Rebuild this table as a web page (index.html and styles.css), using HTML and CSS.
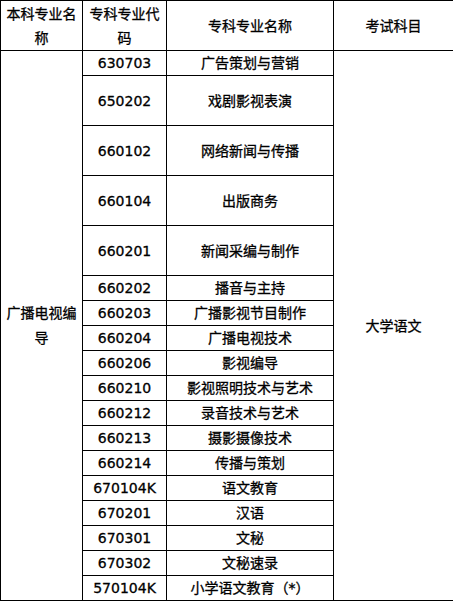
FILE: index.html
```html
<!DOCTYPE html>
<html lang="zh">
<head>
<meta charset="utf-8">
<link rel="stylesheet" href="styles.css">
</head>
<body>
<table class="majors">
  <colgroup>
    <col class="c1"><col class="c2"><col class="c3"><col class="c4">
  </colgroup>
  <thead>
    <tr class="head">
      <th>本科专业名称</th>
      <th>专科专业代码</th>
      <th>专科专业名称</th>
      <th>考试科目</th>
    </tr>
  </thead>
  <tbody>
    <tr class="r1">
      <td rowspan="18" class="major">广播电视编导</td>
      <td>630703</td><td>广告策划与营销</td>
      <td rowspan="18" class="subject">大学语文</td>
    </tr>
    <tr class="r2"><td>650202</td><td>戏剧影视表演</td></tr>
    <tr class="r2"><td>660102</td><td>网络新闻与传播</td></tr>
    <tr class="r2"><td>660104</td><td>出版商务</td></tr>
    <tr class="r2"><td>660201</td><td>新闻采编与制作</td></tr>
    <tr class="r1"><td>660202</td><td>播音与主持</td></tr>
    <tr class="r1"><td>660203</td><td>广播影视节目制作</td></tr>
    <tr class="r1"><td>660204</td><td>广播电视技术</td></tr>
    <tr class="r1"><td>660206</td><td>影视编导</td></tr>
    <tr class="r1"><td>660210</td><td>影视照明技术与艺术</td></tr>
    <tr class="r1"><td>660212</td><td>录音技术与艺术</td></tr>
    <tr class="r1"><td>660213</td><td>摄影摄像技术</td></tr>
    <tr class="r1"><td>660214</td><td>传播与策划</td></tr>
    <tr class="r1"><td>670104K</td><td>语文教育</td></tr>
    <tr class="r1"><td>670201</td><td>汉语</td></tr>
    <tr class="r1"><td>670301</td><td>文秘</td></tr>
    <tr class="r1"><td>670302</td><td>文秘速录</td></tr>
    <tr class="r1"><td>570104K</td><td>小学语文教育（*）</td></tr>
  </tbody>
</table>
</body>
</html>
```
FILE: styles.css
```css
html, body {
  margin: 0;
  padding: 0;
  background: #fff;
}

.majors {
  width: 453px;
  table-layout: fixed;
  border-collapse: collapse;
  font-family: "DejaVu Sans", "Noto Sans CJK SC", sans-serif;
  font-size: 14px;
  color: #000;
  -webkit-text-stroke: 0.3px #000;
}

.c1 { width: 82px; }
.c2 { width: 84px; }
.c3 { width: 167px; }
.c4 { width: 120px; }

.majors th,
.majors td {
  border: 1px solid #000;
  padding: 0 4px;
  text-align: center;
  vertical-align: middle;
  line-height: 20px;
  font-weight: normal;
}

.majors th {
  line-height: 24px;
}

.majors .major {
  line-height: 25px;
}

.head { height: 50px; }
.r1 { height: 25px; }
.r2 { height: 50px; }
```
